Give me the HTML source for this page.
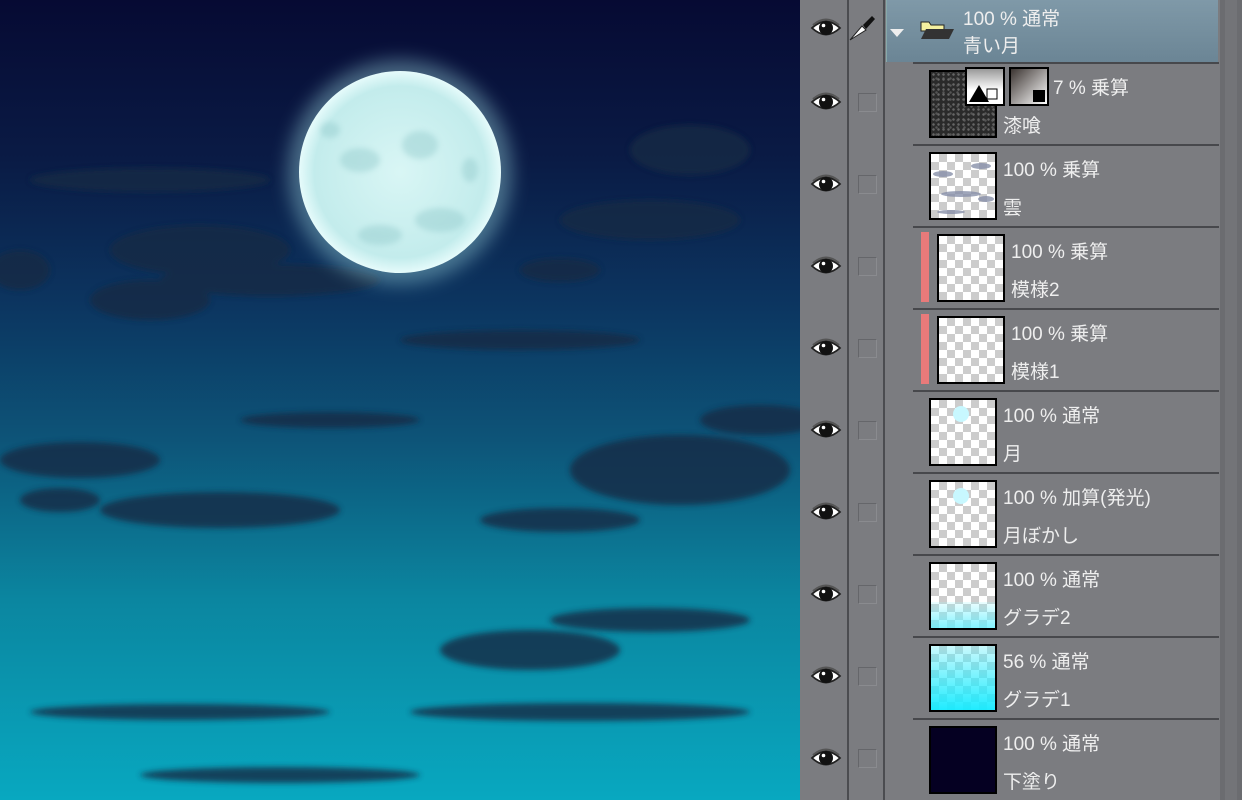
<!DOCTYPE html>
<html><head><meta charset="utf-8"><style>
*{margin:0;padding:0;box-sizing:border-box}
body{width:1242px;height:800px;overflow:hidden;background:#7b7c80;font-family:"Liberation Sans","Noto Sans CJK JP",sans-serif;position:relative}
#cv{position:absolute;left:0;top:0;width:800px;height:800px;background:linear-gradient(#060a33 0%,#0a1b45 20%,#0c3560 38%,#0d5478 55%,#0b86a0 75%,#08a8c0 100%)}
#panel{position:absolute;left:800px;top:0;width:442px;height:800px;background:#7b7c80}
.vl{position:absolute;top:0;width:2px;height:800px;background:#4b4c50}
.sb{position:absolute;left:1220px;top:0;width:22px;height:800px;background:#6b6c70}
.sb2{position:absolute;left:1225px;top:0;width:12px;height:800px;background:#737478}
.hdr{position:absolute;left:886px;top:0;width:332px;height:62px;background:linear-gradient(#7f99a8,#6b8595);border-left:1px solid #8aa;}
.sep{position:absolute;left:913px;width:306px;height:2px;background:#47484c}
.th{position:absolute;width:68px;height:68px;border:2px solid #000}
.chk{background-color:#fff;background-image:linear-gradient(45deg,#ccc 25%,transparent 25%,transparent 75%,#ccc 75%),linear-gradient(45deg,#ccc 25%,transparent 25%,transparent 75%,#ccc 75%);background-size:16px 16px;background-position:0 0,8px 8px}
.t{position:absolute;color:#eeeeee;font-size:19px;white-space:nowrap;margin-top:-3px}
.box{position:absolute;left:858px;width:19px;height:19px;border:1px solid #65666a;border-right-color:#8a8b8f;border-bottom-color:#8a8b8f}
.red{position:absolute;left:921px;width:8px;height:70px;background:#e87a7a}
</style></head><body>
<div id="cv">
<svg width="800" height="800" style="position:absolute;left:0;top:0">
<defs>
<filter id="b"><feGaussianBlur stdDeviation="3"/></filter>
<filter id="g"><feGaussianBlur stdDeviation="9"/></filter>
<filter id="s"><feGaussianBlur stdDeviation="3"/></filter>
<radialGradient id="m" cx="50%" cy="50%" r="50%"><stop offset="0" stop-color="#d9f6f5"/><stop offset="0.85" stop-color="#c3ecec"/><stop offset="1" stop-color="#e6fbfb"/></radialGradient>
</defs>
<g fill="#142a45" opacity="0.8" filter="url(#b)">
<ellipse cx="150" cy="180" rx="120" ry="12"/><ellipse cx="200" cy="250" rx="90" ry="25"/><ellipse cx="150" cy="300" rx="60" ry="20"/><ellipse cx="20" cy="270" rx="30" ry="20"/>
<ellipse cx="270" cy="280" rx="110" ry="16"/>
<ellipse cx="690" cy="150" rx="60" ry="25"/><ellipse cx="650" cy="220" rx="90" ry="20"/><ellipse cx="560" cy="270" rx="40" ry="12"/>
<ellipse cx="520" cy="340" rx="120" ry="10"/><ellipse cx="330" cy="420" rx="90" ry="8"/>
<ellipse cx="80" cy="460" rx="80" ry="18"/><ellipse cx="220" cy="510" rx="120" ry="18"/><ellipse cx="60" cy="500" rx="40" ry="12"/>
<ellipse cx="680" cy="470" rx="110" ry="35"/><ellipse cx="560" cy="520" rx="80" ry="12"/><ellipse cx="760" cy="420" rx="60" ry="15"/>
<ellipse cx="530" cy="650" rx="90" ry="20"/><ellipse cx="650" cy="620" rx="100" ry="12"/>
<ellipse cx="180" cy="712" rx="150" ry="8"/><ellipse cx="580" cy="712" rx="170" ry="9"/><ellipse cx="280" cy="775" rx="140" ry="8"/>
</g>
<circle cx="400" cy="172" r="112" fill="#bff" opacity="0.35" filter="url(#g)"/>
<circle cx="400" cy="172" r="101" fill="url(#m)"/>
<g fill="#8cc6c8" opacity="0.4" filter="url(#s)">
<ellipse cx="360" cy="160" rx="20" ry="12"/><ellipse cx="420" cy="145" rx="18" ry="14"/><ellipse cx="440" cy="220" rx="25" ry="12"/><ellipse cx="380" cy="235" rx="22" ry="10"/><ellipse cx="470" cy="170" rx="8" ry="12"/><ellipse cx="330" cy="130" rx="10" ry="8"/>
</g>
</svg>
</div>
<div id="panel"></div>
<div class="vl" style="left:847px"></div>
<div class="vl" style="left:883px"></div>
<div class="sb"></div><div class="sb2"></div>
<div class="hdr"></div>
<svg style="position:absolute;left:848px;top:14px" width="30" height="28"><path d="M2 26 L14 12 L18 16 Z" fill="#fff" stroke="#222" stroke-width="1"/><path d="M15 11 L24 2 L27 5 L18 15 Z" fill="#111"/></svg>
<svg style="position:absolute;left:889px;top:28px" width="16" height="10"><path d="M1 1 H15 L8 9 Z" fill="#eee"/></svg>
<svg style="position:absolute;left:920px;top:19px" width="36" height="22"><path d="M1 3 H9 L11 6 H24 V12 H1 Z" fill="#f4f0a0" stroke="#222"/><path d="M1 20 L6 10 H34 L29 20 Z" fill="#333"/></svg>
<div class="t" style="left:963px;top:7px">100 % 通常</div>
<div class="t" style="left:963px;top:34px">青い月</div>

<div class="sep" style="top:62px;left:913px"></div>
<div class="sep" style="top:144px"></div><div class="sep" style="top:226px"></div><div class="sep" style="top:308px"></div><div class="sep" style="top:390px"></div><div class="sep" style="top:472px"></div><div class="sep" style="top:554px"></div><div class="sep" style="top:636px"></div><div class="sep" style="top:718px"></div>

<div class="th" style="left:929px;top:70px;background:radial-gradient(#666 1px,transparent 1.5px) 0 0/5px 5px,radial-gradient(#555 1px,transparent 1.5px) 2px 3px/7px 7px,#2a2a2a"></div>
<div class="th" style="left:965px;top:67px;width:40px;height:39px;background:linear-gradient(#999,#fff 60%);border-width:2px"><svg width="36" height="35"><path d="M2 33 L12 16 L22 33 Z" fill="#000"/><rect x="20" y="20" width="10" height="10" fill="#fff" stroke="#000"/></svg></div>
<div class="th" style="left:1009px;top:67px;width:40px;height:39px;background:linear-gradient(135deg,#3b3431,#fff)"><div style="position:absolute;right:2px;bottom:2px;width:12px;height:12px;background:#000"></div></div>
<div class="t" style="left:1053px;top:76px">7 % 乗算</div>
<div class="t" style="left:1003px;top:114px">漆喰</div>

<div class="th chk" style="left:929px;top:152px"><svg width="64" height="64"><g fill="#8890aa" opacity=".8"><ellipse cx="12" cy="20" rx="10" ry="3"/><ellipse cx="50" cy="12" rx="10" ry="3"/><ellipse cx="30" cy="40" rx="20" ry="3"/><ellipse cx="55" cy="45" rx="8" ry="3"/><ellipse cx="20" cy="58" rx="14" ry="2"/></g></svg></div>
<div class="t" style="left:1003px;top:158px">100 % 乗算</div>
<div class="t" style="left:1003px;top:196px">雲</div>

<div class="red" style="top:232px"></div>
<div class="th chk" style="left:937px;top:234px"></div>
<div class="t" style="left:1011px;top:240px">100 % 乗算</div>
<div class="t" style="left:1011px;top:278px">模様2</div>

<div class="red" style="top:314px"></div>
<div class="th chk" style="left:937px;top:316px"></div>
<div class="t" style="left:1011px;top:322px">100 % 乗算</div>
<div class="t" style="left:1011px;top:360px">模様1</div>

<div class="th chk" style="left:929px;top:398px"><div style="position:absolute;left:22px;top:6px;width:16px;height:16px;border-radius:50%;background:#c8f8ff"></div></div>
<div class="t" style="left:1003px;top:404px">100 % 通常</div>
<div class="t" style="left:1003px;top:442px">月</div>

<div class="th chk" style="left:929px;top:480px"><div style="position:absolute;left:22px;top:6px;width:16px;height:16px;border-radius:50%;background:#c8f8ff"></div></div>
<div class="t" style="left:1003px;top:486px">100 % 加算(発光)</div>
<div class="t" style="left:1003px;top:524px">月ぼかし</div>

<div class="th chk" style="left:929px;top:562px"><div style="position:absolute;left:0;bottom:0;width:64px;height:26px;background:linear-gradient(rgba(160,250,255,0.2),rgba(100,240,255,0.8))"></div></div>
<div class="t" style="left:1003px;top:568px">100 % 通常</div>
<div class="t" style="left:1003px;top:606px">グラデ2</div>

<div class="th chk" style="left:929px;top:644px"><div style="position:absolute;left:0;top:0;width:64px;height:64px;background:linear-gradient(rgba(120,240,250,0.4),rgba(20,235,255,0.95))"></div></div>
<div class="t" style="left:1003px;top:650px">56 % 通常</div>
<div class="t" style="left:1003px;top:688px">グラデ1</div>

<div class="th" style="left:929px;top:726px;background:#050022"></div>
<div class="t" style="left:1003px;top:732px">100 % 通常</div>
<div class="t" style="left:1003px;top:770px">下塗り</div>

<svg style="position:absolute;left:0;top:0" width="1242" height="800">
<defs><g id="e"><path d="M-14 0 Q0 -13 14 0 Q0 13 -14 0 Z" fill="#fff" stroke="#222" stroke-width="1.8"/><circle r="7" fill="#111"/><circle cx="-2.5" cy="-2.5" r="1.8" fill="#fff"/><path d="M-13 -3 Q0 -14 13 -3" fill="none" stroke="#555" stroke-width="2"/></g></defs>
<use href="#e" x="826" y="28"/><use href="#e" x="826" y="102"/><use href="#e" x="826" y="184"/><use href="#e" x="826" y="266"/><use href="#e" x="826" y="348"/><use href="#e" x="826" y="430"/><use href="#e" x="826" y="512"/><use href="#e" x="826" y="594"/><use href="#e" x="826" y="676"/><use href="#e" x="826" y="758"/>
</svg>
<div class="box" style="top:93px"></div><div class="box" style="top:175px"></div><div class="box" style="top:257px"></div><div class="box" style="top:339px"></div><div class="box" style="top:421px"></div><div class="box" style="top:503px"></div><div class="box" style="top:585px"></div><div class="box" style="top:667px"></div><div class="box" style="top:749px"></div>
</body></html>
